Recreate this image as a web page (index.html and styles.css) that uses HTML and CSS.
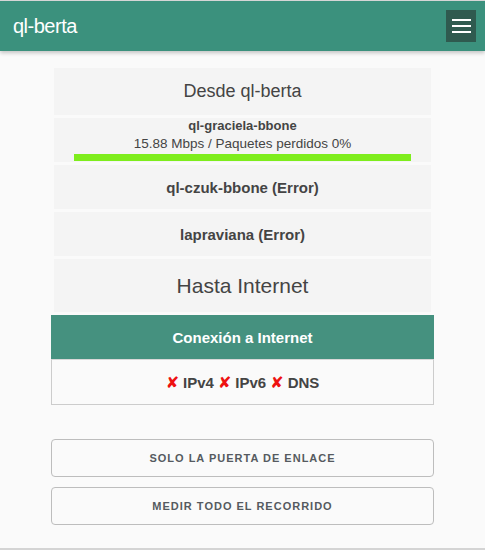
FILE: index.html
```html
<!DOCTYPE html>
<html lang="es">
<head>
<meta charset="utf-8">
<title>ql-berta</title>
<link rel="stylesheet" href="styles.css">
</head>
<body>
<header class="topbar">
  <span class="brand">ql-berta</span>
  <button class="menu-btn" aria-label="menu">
    <span class="bar"></span><span class="bar"></span><span class="bar"></span>
  </button>
</header>
<main class="content">
  <div class="row row-title">Desde ql-berta</div>
  <div class="row row-node">
    <div class="node-name">ql-graciela-bbone</div>
    <div class="node-stats">15.88 Mbps / Paquetes perdidos 0%</div>
    <div class="speed-bar"></div>
  </div>
  <div class="row row-error">ql-czuk-bbone (Error)</div>
  <div class="row row-error">lapraviana (Error)</div>
  <div class="row row-title row-big">Hasta Internet</div>
  <div class="inet-head">Conexión a Internet</div>
  <div class="inet-body"><span class="x">✘</span> IPv4 <span class="x">✘</span> IPv6 <span class="x">✘</span> DNS</div>
  <div class="actions">
    <button class="action">SOLO LA PUERTA DE ENLACE</button>
    <button class="action">MEDIR TODO EL RECORRIDO</button>
  </div>
</main>
<footer class="bottom"></footer>
</body>
</html>
```

FILE: styles.css
```css
html, body {
  margin: 0;
  padding: 0;
}
body {
  background: #fafafa;
  font-family: "Liberation Sans", Arial, sans-serif;
  color: #444;
  overflow: hidden;
}
.topbar {
  border-top: 1px solid #d6d6d6;
  height: 50px;
  background: #3b917d;
  box-shadow: 0 2px 4px rgba(0,0,0,0.22);
  display: flex;
  align-items: center;
  justify-content: space-between;
  padding: 0 9px 0 13px;
  position: relative;
}
.brand {
  color: #fff;
  font-size: 20px;
  letter-spacing: -0.5px;
}
.menu-btn {
  width: 30px;
  height: 32px;
  background: #2f5a4f;
  border: 0;
  padding: 0;
  display: flex;
  flex-direction: column;
  align-items: center;
  justify-content: center;
  gap: 4px;
}
.menu-btn .bar {
  display: block;
  width: 19px;
  height: 2px;
  background: #fff;
}
.content {
  width: 383px;
  margin: 0 auto;
  padding-top: 14px;
}
.row {
  margin: 3px;
  background: #f4f4f4;
  display: flex;
  align-items: center;
  justify-content: center;
  text-align: center;
}
.row-title {
  height: 47px;
  font-size: 18px;
}
.row-big {
  height: 53px;
  font-size: 21px;
}
.row-error {
  height: 44px;
  font-size: 15px;
  font-weight: bold;
}
.row-node {
  height: 44px;
  flex-direction: column;
  justify-content: flex-start;
}
.node-name {
  font-size: 13px;
  font-weight: bold;
  line-height: 15px;
}
.node-stats {
  font-size: 13.5px;
  line-height: 16px;
  margin-top: 3px;
}
.speed-bar {
  align-self: stretch;
  margin: 2px 20px 0;
  height: 7px;
  background: #7eed1c;
}
.inet-head {
  height: 44px;
  background: #45917f;
  color: #fff;
  font-size: 15px;
  font-weight: bold;
  display: flex;
  align-items: center;
  justify-content: center;
}
.inet-body {
  height: 44px;
  border: 1px solid #cccccc;
  border-top-color: #d8d8d8;
  font-size: 15px;
  font-weight: bold;
  display: flex;
  align-items: center;
  justify-content: center;
  gap: 4px;
}
.x {
  color: #ee1111;
  font-family: "DejaVu Sans", sans-serif;
  font-size: 16px;
}
.actions {
  margin-top: 34px;
  display: flex;
  flex-direction: column;
  gap: 10px;
}
.action {
  height: 38px;
  border: 1px solid #bdbdbd;
  border-radius: 4px;
  background: transparent;
  font-family: "Liberation Sans", Arial, sans-serif;
  font-size: 11px;
  font-weight: bold;
  letter-spacing: 1px;
  color: #555a60;
  padding: 0;
}
.bottom {
  margin-top: 23px;
  height: 2px;
  background: #d4d4d4;
}
```
